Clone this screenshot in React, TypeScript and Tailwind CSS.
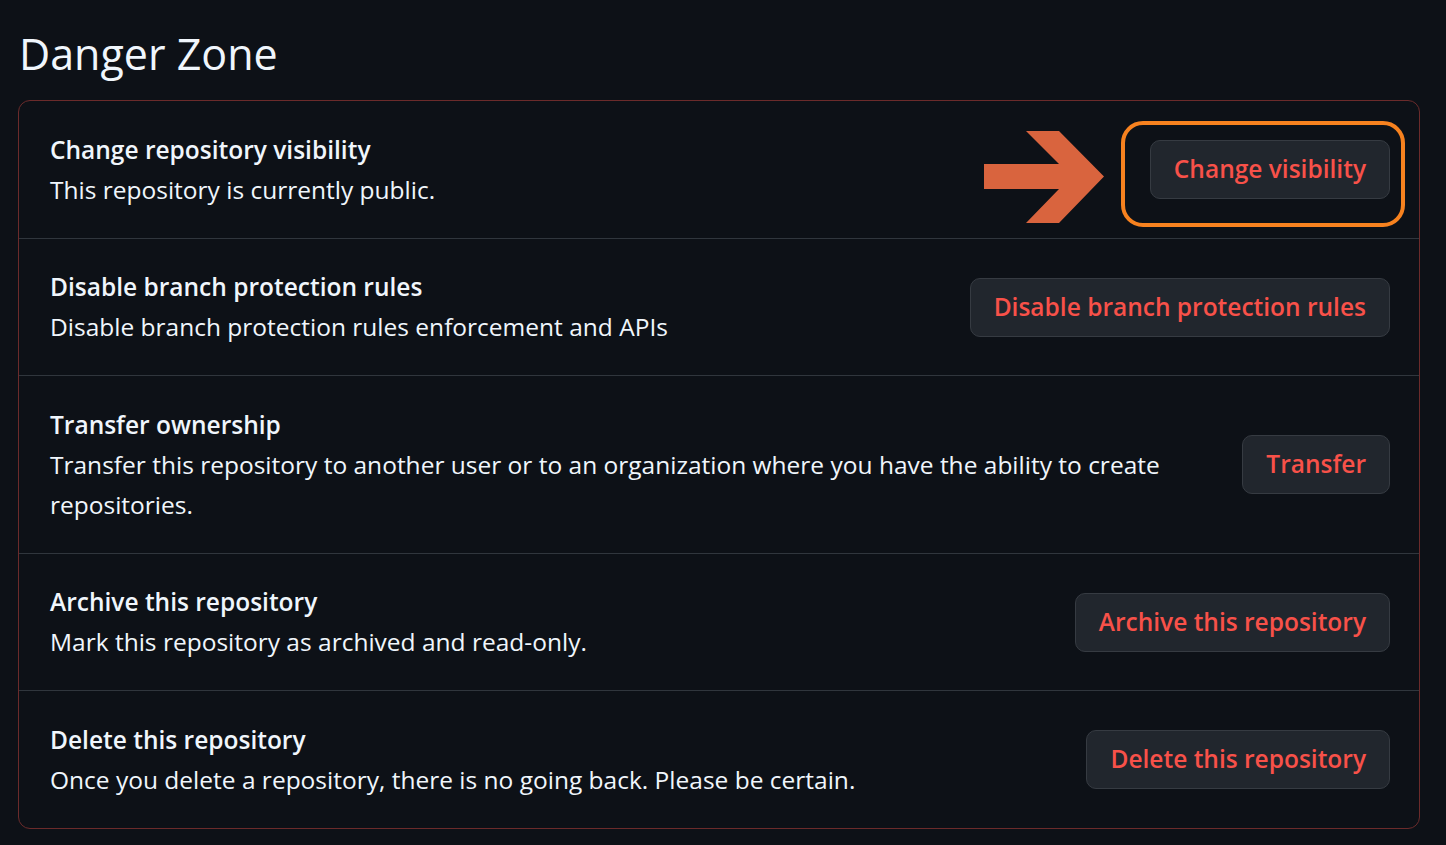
const rows = [
  {
    title: "Change repository visibility",
    description: "This repository is currently public.",
    action: "Change visibility",
    highlight: true,
  },
  {
    title: "Disable branch protection rules",
    description: "Disable branch protection rules enforcement and APIs",
    action: "Disable branch protection rules",
  },
  {
    title: "Transfer ownership",
    description:
      "Transfer this repository to another user or to an organization where you have the ability to create repositories.",
    action: "Transfer",
  },
  {
    title: "Archive this repository",
    description: "Mark this repository as archived and read-only.",
    action: "Archive this repository",
  },
  {
    title: "Delete this repository",
    description: "Once you delete a repository, there is no going back. Please be certain.",
    action: "Delete this repository",
  },
];

function PointerArrow() {
  return (
    <svg
      className="pointer-events-none absolute left-[-166px] top-[-9px]"
      width="120"
      height="92"
      viewBox="0 0 120 92"
    >
      <polygon
        points="0,33 75,33 42,0 75,0 120,45.5 75,92 42,92 75,58 0,58"
        fill="#d9643e"
      />
    </svg>
  );
}

export default function App() {
  return (
    <div className="min-h-screen bg-[#0d1117] pl-[18px] pr-[26px] pt-[24px] font-['Open_Sans',sans-serif] text-[#f0f6fc]">
      <h2 className="pl-[1px] text-[43px] font-normal leading-[60px]">Danger Zone</h2>

      <div className="mt-[16px] rounded-[12px] border border-[#6b2b2b]">
        {rows.map((row, index) => (
          <div
            key={row.title}
            className={`flex items-center gap-[40px] pb-[28px] pl-[31px] pr-[29px] pt-[28.5px] ${
              index > 0 ? "border-t border-[#30363d]" : ""
            }`}
          >
            <div className="min-w-0 flex-1 text-[24.5px] leading-[40px]">
              <div className="font-semibold">{row.title}</div>
              <p>{row.description}</p>
            </div>

            <div className="relative shrink-0">
              {row.highlight ? (
                <>
                  <PointerArrow />
                  <div className="pointer-events-none absolute bottom-[-28px] left-[-29px] right-[-15px] top-[-19px] rounded-[22px] border-[4px] border-[#f7821f]" />
                </>
              ) : null}
              <button
                type="button"
                className="relative h-[59px] rounded-[10px] border border-[#363b42] bg-[#21262d] px-[23px] text-[24.5px] font-semibold text-[#f85149]"
              >
                {row.action}
              </button>
            </div>
          </div>
        ))}
      </div>
    </div>
  );
}
